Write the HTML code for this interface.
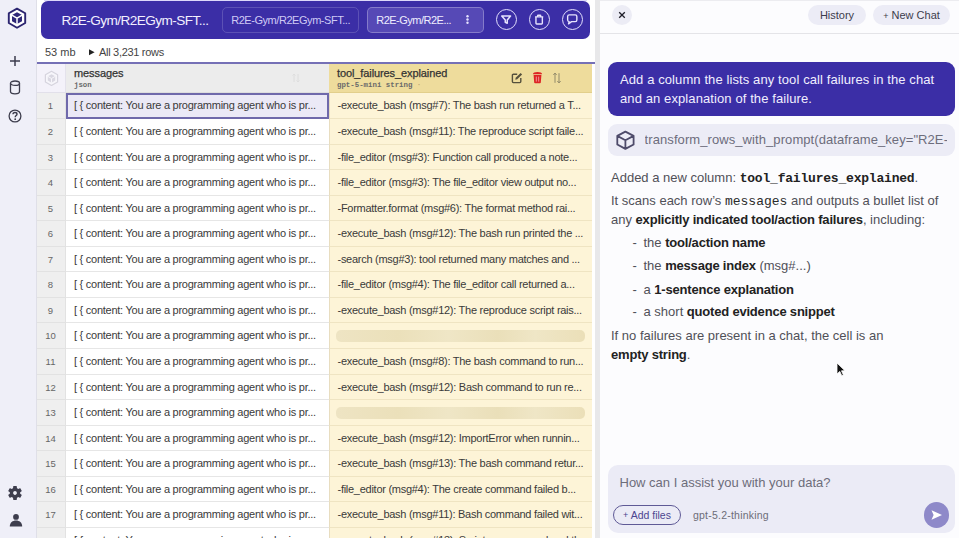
<!DOCTYPE html>
<html><head><meta charset="utf-8">
<style>
*{box-sizing:border-box;margin:0;padding:0}
html,body{width:959px;height:538px;overflow:hidden;background:#fff;font-family:"Liberation Sans",sans-serif;color:#333}
.abs{position:absolute}
#sidebar{position:absolute;left:0;top:0;width:37px;height:538px;background:#efeff8;border-right:1px solid #dfdfe8;z-index:2}
#sidebar svg{position:absolute}
#main{position:absolute;left:36px;top:0;width:559px;height:538px;background:#fff;overflow:hidden}
#hdr{position:absolute;left:5.2px;top:1.2px;width:549px;height:37.4px;background:#3b2ea6;border-radius:7px}
#title{position:absolute;left:20.2px;top:11.8px;font-size:13.6px;line-height:16px;color:#f2f0ff;letter-spacing:-0.55px;white-space:nowrap}
.tab{position:absolute;top:6px;height:26px;border-radius:5px;border:1px solid rgba(255,255,255,0.17);font-size:11px;line-height:24px;color:#cfcaf5;white-space:nowrap;letter-spacing:-0.45px}
#tab1{left:181px;width:137px;padding-left:8px}
#tab2{left:326px;width:117px;padding-left:8px;letter-spacing:-0.5px;background:#5649b6;border-color:rgba(255,255,255,0.28);color:#efedff}
.kebab{position:absolute;right:14.5px;top:7px;width:3px;height:10px}
.kebab i{display:block;width:2.4px;height:2.4px;border-radius:50%;background:#e6e3ff;margin:0 0 0.9px 0}
.circ{position:absolute;top:7.8px;width:21.5px;height:21.5px;border-radius:50%;border:1.6px solid #e2dffd}
.circ svg{position:absolute;left:0;top:0}
#info{position:absolute;left:9px;top:46px;font-size:11px;line-height:13px;color:#444;white-space:nowrap}
#info .tri{position:absolute;left:43px;top:1px;font-size:8px}
#info .all{position:absolute;left:54px;top:0;letter-spacing:-0.3px}
#tline{position:absolute;left:0;top:62px;width:559px;height:2px;background:#7570b6}
#thead{position:absolute;left:0;top:64px;width:559px;height:28.6px}
.h0{position:absolute;left:0;top:0;width:30px;height:28.6px;background:#f4f2fa;border-bottom:1px solid #e2e0ea;border-right:1px solid #e4e2ec}
.h1{position:absolute;left:30px;top:0;width:263px;height:28.6px;background:#ececec;border-bottom:1px solid #dedede}
.h2{position:absolute;left:293px;top:0;width:263px;height:28.6px;background:#eedc9c;border-bottom:1px solid #e2cf8c}
.hn{position:absolute;left:8px;top:3px;font-size:11px;line-height:13px;color:#333;letter-spacing:-0.1px;white-space:nowrap;-webkit-text-stroke:0.25px #333}
.ht{position:absolute;left:8px;top:15.5px;font-family:"Liberation Mono",monospace;font-size:7.4px;line-height:10px;color:#6a6a6a;font-weight:bold;white-space:nowrap}
.row{position:absolute;left:0;width:559px;height:25.6px}
.idx{position:absolute;left:0;top:0;width:30px;height:25.6px;background:#efefef;border-bottom:1px solid #e2e2e2;border-right:1px solid #e2e2e2;font-size:9.5px;line-height:25.2px;text-align:center;color:#666}
.c1{position:absolute;left:30px;top:0;width:263px;height:25.6px;background:#fff;border-bottom:1px solid #e6e6e6;font-size:11px;line-height:25px;padding-left:8px;color:#3a3a3a;letter-spacing:-0.26px;white-space:nowrap;overflow:hidden}
.c1.sel{background:#ebe9f6;border:2px solid #6f69ab;padding-left:6px;line-height:21.6px}
.c2{position:absolute;left:293px;top:0;width:263px;height:25.6px;background:#fdf4d7;border-bottom:1px solid #efe4c2;border-left:1px solid #e8ddc0;font-size:11px;line-height:25px;padding-left:7.5px;color:#3a3a3a;letter-spacing:-0.27px;white-space:nowrap;overflow:hidden}
.skel{position:absolute;left:5.5px;top:6.5px;width:249.5px;height:12px;border-radius:5px;background:linear-gradient(90deg,#eee4c3 0%,#ebe0ba 25%,#efe6c6 45%,#eadfb9 65%,#efe6c6 80%,#ebdfb8 100%);filter:blur(0.4px)}
#resizer{position:absolute;left:595px;top:0;width:5px;height:538px;background:#e8e8ea}
#chat{position:absolute;left:600px;top:0;width:359px;height:538px;background:#fcfcfe;overflow:hidden}
#chead{position:absolute;left:0;top:0;width:359px;height:34px;border-bottom:1px solid #e4e4e8;border-top:1px solid #ececf0}
#close{position:absolute;left:11.5px;top:3.8px;width:20px;height:20px;border-radius:50%;background:#ececf5}
.pill{position:absolute;top:4px;height:20px;border-radius:10px;background:#ececf6;font-size:11px;line-height:20px;color:#3c3c4c;text-align:center;white-space:nowrap}
#bubble{position:absolute;left:8px;top:62px;width:347px;height:53.5px;border-radius:9px;background:#3b2ea6;color:#f1eeff;font-size:13px;line-height:19px;padding:8.4px 0 0 12px;letter-spacing:0.1px}
#tool{position:absolute;left:8px;top:124px;width:347px;height:32px;border-radius:9px;background:#ececf6;overflow:hidden}
#tool .t{position:absolute;left:36.6px;top:8px;width:302px;overflow:hidden;font-size:13px;line-height:16px;color:#6d6d7c;white-space:nowrap;letter-spacing:0.08px}
#resp{position:absolute;left:11px;top:167px;width:345px;font-size:13px;line-height:19px;color:#505058}
.ln{position:absolute;left:0;white-space:nowrap}
.dash{position:absolute;left:-11px}
#resp b{color:#222;font-weight:bold;letter-spacing:-0.2px}
#resp code{font-family:"Liberation Mono",monospace;color:#2a2a2a;line-height:0}
#input{position:absolute;left:8px;top:464.5px;width:346.5px;height:68px;border-radius:10px;background:#ebebf6}
#ph{position:absolute;left:11.5px;top:10px;font-size:13px;line-height:16px;color:#6d6d7a;white-space:nowrap}
#addf{position:absolute;left:5px;top:40px;width:68px;height:20px;border-radius:10px;border:1px solid #5f5a96;font-size:10.5px;line-height:18px;color:#4b4690;text-align:center;white-space:nowrap}
#model{position:absolute;left:85px;top:44px;font-size:10.5px;line-height:13px;color:#6d6d78;white-space:nowrap;letter-spacing:0.22px}
#send{position:absolute;left:315.5px;top:37.5px;width:25.5px;height:25.5px;border-radius:50%;background:#8e89c9}
</style></head><body>
<div id="sidebar">
  <svg style="left:6px;top:7px" width="22" height="23" viewBox="0 0 22 23"><path d="M11 1.6 L19.2 6.3 V16 L11 20.7 L2.8 16 V6.3 Z" fill="#fff" stroke="#2b2470" stroke-width="1.9" stroke-linejoin="round"/><path d="M11 5.2 L16 8.1 V14.2 L11 17.1 L6 14.2 V8.1 Z" fill="#2f2878"/><path d="M5.8 8.1 L11 11.1 L16.2 8.1 M11 11.1 V17.4" fill="none" stroke="#fff" stroke-width="1.5"/></svg>
  <svg style="left:9px;top:55px" width="12" height="12" viewBox="0 0 12 12"><path d="M6 1V11M1 6H11" stroke="#3d3d4d" stroke-width="1.5"/></svg>
  <svg style="left:9px;top:80px" width="12" height="15" viewBox="0 0 12 15"><ellipse cx="6" cy="3.2" rx="4.5" ry="2.2" fill="none" stroke="#3d3d4d" stroke-width="1.3"/><path d="M1.5 3.2V11.6C1.5 12.8 3.5 13.8 6 13.8S10.5 12.8 10.5 11.6V3.2" fill="none" stroke="#3d3d4d" stroke-width="1.3"/></svg>
  <svg style="left:8px;top:108.5px" width="14" height="14" viewBox="0 0 14 14"><circle cx="7" cy="7" r="5.9" fill="none" stroke="#3d3d4d" stroke-width="1.3"/><path d="M5 5.3C5 4.1 5.9 3.5 7 3.5S9 4.2 9 5.2C9 6.5 7.2 6.6 7.2 8.2" fill="none" stroke="#3d3d4d" stroke-width="1.4"/><circle cx="7.2" cy="10.2" r="0.9" fill="#3d3d4d"/></svg>
  <svg style="left:8.2px;top:486px" width="14" height="14" viewBox="2.3 2.3 19.4 19.4"><path fill="#3d3d4d" d="M19.14 12.94c.04-.3.06-.61.06-.94 0-.32-.02-.64-.07-.94l2.03-1.58c.18-.14.23-.41.12-.61l-1.92-3.32c-.12-.22-.37-.29-.59-.22l-2.39.96c-.5-.38-1.03-.7-1.620-.94l-.36-2.54c-.04-.24-.24-.41-.48-.41h-3.84c-.24 0-.43.17-.47.41l-.36 2.54c-.59.24-1.13.57-1.62.94l-2.39-.96c-.22-.08-.47 0-.59.22L2.740 8.87c-.12.21-.08.47.12.61l2.03 1.58c-.05.3-.09.63-.09.94s.02.64.07.94l-2.03 1.58c-.18.14-.23.41-.12.61l1.92 3.32c.12.22.37.29.59.22l2.39-.96c.5.38 1.03.7 1.62.94l.36 2.54c.05.24.24.41.48.41h3.84c.24 0 .44-.17.47-.41l.36-2.54c.59-.24 1.13-.56 1.62-.94l2.39.96c.22.08.47 0 .59-.22l1.92-3.32c.12-.22.07-.47-.12-.61l-2.010-1.58zM12 14.6c-1.43 0-2.6-1.17-2.6-2.6s1.17-2.6 2.6-2.6 2.6 1.17 2.6 2.6-1.17 2.6-2.6 2.6z"/></svg>
  <svg style="left:8.5px;top:513px" width="14" height="14" viewBox="0 0 14 14"><circle cx="7" cy="3.9" r="2.9" fill="#3d3d4d"/><path d="M0.8 13.6C0.8 9.6 3.6 7.6 7 7.6S13.2 9.6 13.2 13.6Z" fill="#3d3d4d"/></svg>
</div>
<div id="main">
  <div style="position:absolute;left:8px;top:0;width:543px;height:1px;background:#dcd8fa"></div>
  <div id="hdr">
    <div id="title">R2E-Gym/R2EGym-SFT...</div>
    <div class="tab" id="tab1">R2E-Gym/R2EGym-SFT...</div>
    <div class="tab" id="tab2">R2E-Gym/R2E...<svg style="position:absolute;left:97px;top:7px" width="5" height="11" viewBox="0 0 5 11"><circle cx="2.5" cy="1.3" r="1.2" fill="#e6e3ff"/><circle cx="2.5" cy="4.5" r="1.2" fill="#e6e3ff"/><circle cx="2.5" cy="7.7" r="1.2" fill="#e6e3ff"/></svg></div>
    <div class="circ" style="left:454.55px"><svg width="19" height="19" viewBox="-9.15 -9.15 19 19"><path d="M-4.4 -3.1H4.4L1.1 0.9V4.1L-0.9 3.1V0.9Z" fill="none" stroke="#e6e3fd" stroke-width="1.5" stroke-linejoin="round"/></svg></div>
    <div class="circ" style="left:487.55px"><svg width="19" height="19" viewBox="-9.15 -9.15 19 19"><path d="M-3.2 -2.3H3.2V4.1C3.2 4.5 2.9 4.8 2.5 4.8H-2.5C-2.9 4.8 -3.2 4.5 -3.2 4.1Z M-4.1 -2.3H4.1 M-1.6 -2.5V-3.2C-1.6 -3.6 -1.3 -3.9 -0.9 -3.9H0.9C1.3 -3.9 1.6 -3.6 1.6 -3.2V-2.5" fill="none" stroke="#e6e3fd" stroke-width="1.4" stroke-linejoin="round"/></svg></div>
    <div class="circ" style="left:520.55px"><svg width="19" height="19" viewBox="-9.15 -9.15 19 19"><path d="M-2.9 -4.3H3.1C4.1 -4.3 4.7 -3.7 4.7 -2.7V0.9C4.7 1.9 4.1 2.5 3.1 2.5H-0.6L-3.6 4.7 -3 2.5C-4 2.4 -4.5 1.8 -4.5 0.9V-2.7C-4.5 -3.7 -3.9 -4.3 -2.9 -4.3Z" fill="none" stroke="#e6e3fd" stroke-width="1.4" stroke-linejoin="round"/></svg></div>
  </div>
  <div id="info">53 mb<svg style="position:absolute;left:43.5px;top:3.3px" width="6" height="7" viewBox="0 0 6 7"><path d="M0 0.3L5.6 3.3 0 6.3Z" fill="#222"/></svg><span class="all">All 3,231 rows</span></div>
  <div id="tline"></div>
  <div id="thead">
    <div class="h0"><svg style="position:absolute;left:7.5px;top:6px" width="15" height="17" viewBox="0 0 15 17"><path d="M7.5 1.3L13.6 4.8V12L7.5 15.5L1.4 12V4.8Z" fill="#f7f6fb" stroke="#d6d4de" stroke-width="1.2" stroke-linejoin="round"/><path d="M7.5 4.2L11.2 6.3V10.6L7.5 12.7L3.8 10.6V6.3Z" fill="#dad8e2"/><path d="M3.7 6.3L7.5 8.5L11.3 6.3M7.5 8.5V12.8" fill="none" stroke="#f7f6fb" stroke-width="1"/></svg></div>
    <div class="h1"><div class="hn">messages</div><div class="ht">json</div><svg style="position:absolute;left:225px;top:8px" width="10" height="12" viewBox="0 0 10 12"><path d="M3 10V2M1.5 3.5L3 2 4.5 3.5M7 2V10M5.5 8.5L7 10 8.5 8.5" fill="none" stroke="#dcdcdc" stroke-width="0.9"/></svg></div>
    <div class="h2"><div class="hn">tool_failures_explained</div><div class="ht">gpt-5-mini string <span style="color:#b9a877">&#183;</span></div>
      <svg style="position:absolute;left:182px;top:7.5px" width="12" height="12" viewBox="0 0 12 12"><path d="M6.2 2.2H2.4C1.8 2.2 1.4 2.6 1.4 3.2V9.6C1.4 10.2 1.8 10.6 2.4 10.6H8.8C9.4 10.6 9.8 10.2 9.8 9.6V6" fill="none" stroke="#55503c" stroke-width="1.4"/><path d="M9.6 0.9L11.1 2.4 6.2 7.3 4.3 7.7 4.7 5.8Z" fill="#55503c"/></svg>
      <svg style="position:absolute;left:202.5px;top:7px" width="11" height="13" viewBox="0 0 11 13"><path d="M0.9 3.3C0.9 1.9 2.9 1.0 5.5 1.0S10.1 1.9 10.1 3.3Z" fill="#dd2424"/><path d="M1.6 4.0H9.4L8.8 11.4C8.8 11.9 8.4 12.2 7.9 12.2H3.1C2.6 12.2 2.2 11.9 2.2 11.4Z" fill="#dd2424"/><path d="M4.3 5.6V10.6M6.7 5.6V10.6" stroke="#f4a3a3" stroke-width="0.9"/></svg>
      <svg style="position:absolute;left:222.5px;top:7.5px" width="10" height="13" viewBox="0 0 10 13"><path d="M3 10.8V1.2M1.3 2.9L3 1.2 4.7 2.9M7 1.2V10.8M5.3 9.1L7 10.8 8.7 9.1" fill="none" stroke="#6c6754" stroke-width="0.7"/></svg>
    </div>
  </div>
  <div id="rows" style="position:absolute;left:0;top:0.8px;width:559px;height:538px">
<div class="row" style="top:92.60px"><div class="idx">1</div><div class="c1 sel"><span>[ { content: You are a programming agent who is pr...</span></div><div class="c2"><span>-execute_bash (msg#7): The bash run returned a T...</span></div></div>
<div class="row" style="top:118.16px"><div class="idx">2</div><div class="c1"><span>[ { content: You are a programming agent who is pr...</span></div><div class="c2"><span>-execute_bash (msg#11): The reproduce script faile...</span></div></div>
<div class="row" style="top:143.72px"><div class="idx">3</div><div class="c1"><span>[ { content: You are a programming agent who is pr...</span></div><div class="c2"><span>-file_editor (msg#3): Function call produced a note...</span></div></div>
<div class="row" style="top:169.28px"><div class="idx">4</div><div class="c1"><span>[ { content: You are a programming agent who is pr...</span></div><div class="c2"><span>-file_editor (msg#3): The file_editor view output no...</span></div></div>
<div class="row" style="top:194.84px"><div class="idx">5</div><div class="c1"><span>[ { content: You are a programming agent who is pr...</span></div><div class="c2"><span>-Formatter.format (msg#6): The format method rai...</span></div></div>
<div class="row" style="top:220.40px"><div class="idx">6</div><div class="c1"><span>[ { content: You are a programming agent who is pr...</span></div><div class="c2"><span>-execute_bash (msg#12): The bash run printed the ...</span></div></div>
<div class="row" style="top:245.96px"><div class="idx">7</div><div class="c1"><span>[ { content: You are a programming agent who is pr...</span></div><div class="c2"><span>-search (msg#3): tool returned many matches and ...</span></div></div>
<div class="row" style="top:271.52px"><div class="idx">8</div><div class="c1"><span>[ { content: You are a programming agent who is pr...</span></div><div class="c2"><span>-file_editor (msg#4): The file_editor call returned a...</span></div></div>
<div class="row" style="top:297.08px"><div class="idx">9</div><div class="c1"><span>[ { content: You are a programming agent who is pr...</span></div><div class="c2"><span>-execute_bash (msg#12): The reproduce script rais...</span></div></div>
<div class="row" style="top:322.64px"><div class="idx">10</div><div class="c1"><span>[ { content: You are a programming agent who is pr...</span></div><div class="c2"><i class="skel"></i></div></div>
<div class="row" style="top:348.20px"><div class="idx">11</div><div class="c1"><span>[ { content: You are a programming agent who is pr...</span></div><div class="c2"><span>-execute_bash (msg#8): The bash command to run...</span></div></div>
<div class="row" style="top:373.76px"><div class="idx">12</div><div class="c1"><span>[ { content: You are a programming agent who is pr...</span></div><div class="c2"><span>-execute_bash (msg#12): Bash command to run re...</span></div></div>
<div class="row" style="top:399.32px"><div class="idx">13</div><div class="c1"><span>[ { content: You are a programming agent who is pr...</span></div><div class="c2"><i class="skel"></i></div></div>
<div class="row" style="top:424.88px"><div class="idx">14</div><div class="c1"><span>[ { content: You are a programming agent who is pr...</span></div><div class="c2"><span>-execute_bash (msg#12): ImportError when runnin...</span></div></div>
<div class="row" style="top:450.44px"><div class="idx">15</div><div class="c1"><span>[ { content: You are a programming agent who is pr...</span></div><div class="c2"><span>-execute_bash (msg#13): The bash command retur...</span></div></div>
<div class="row" style="top:476.00px"><div class="idx">16</div><div class="c1"><span>[ { content: You are a programming agent who is pr...</span></div><div class="c2"><span>-file_editor (msg#4): The create command failed b...</span></div></div>
<div class="row" style="top:501.56px"><div class="idx">17</div><div class="c1"><span>[ { content: You are a programming agent who is pr...</span></div><div class="c2"><span>-execute_bash (msg#11): Bash command failed wit...</span></div></div>
<div class="row" style="top:527.12px"><div class="idx">18</div><div class="c1"><span>[ { content: You are a programming agent who is pr...</span></div><div class="c2"><span>-execute_bash (msg#13): Script … command and th...</span></div></div>
  </div>
</div>
<div id="resizer"></div>
<div id="chat">
  <div id="chead">
    <div id="close"><svg style="position:absolute;left:5px;top:5px" width="10" height="10" viewBox="0 0 10 10"><path d="M2.2 2.2L7.8 7.8M7.8 2.2L2.2 7.8" stroke="#1e1e28" stroke-width="1.3"/></svg></div>
    <div class="pill" style="left:208px;width:58px">History</div>
    <div class="pill" style="left:273px;width:77px"><span style="font-size:9px;position:relative;top:-0.5px">+</span> New Chat</div>
  </div>
  <div id="bubble">Add a column the lists any tool call failures in the chat<br>and an explanation of the failure.</div>
  <div id="tool"><svg style="position:absolute;left:8px;top:5.5px" width="19" height="20" viewBox="0 0 19 20"><path d="M9.4 1.6L17.6 5.9V14.5L9.4 18.9L1.3 14.5V5.9Z M1.3 5.9L9.4 10.3L17.6 5.9 M9.4 10.3V18.9" fill="none" stroke="#4e4b6a" stroke-width="1.8" stroke-linejoin="round"/></svg><div class="t">transform_rows_with_prompt(dataframe_key="R2E-Gym</div></div>
  <div id="resp">
    <div class="ln" style="top:0.65px">Added a new column: <code><b>tool_failures_explained</b></code>.</div>
    <div class="ln" style="top:24.10px">It scans each row&#8217;s <code>messages</code> and outputs a bullet list of</div>
    <div class="ln" style="top:42.70px">any <b>explicitly indicated tool/action failures</b>, including:</div>
    <div class="ln" style="top:66.10px;left:32.5px"><span class="dash">-</span>the <b>tool/action name</b></div>
    <div class="ln" style="top:89.00px;left:32.5px"><span class="dash">-</span>the <b>message index</b> (msg#...)</div>
    <div class="ln" style="top:112.50px;left:32.5px"><span class="dash">-</span>a <b>1-sentence explanation</b></div>
    <div class="ln" style="top:135.40px;left:32.5px"><span class="dash">-</span>a short <b>quoted evidence snippet</b></div>
    <div class="ln" style="top:159.2px">If no failures are present in a chat, the cell is an</div>
    <div class="ln" style="top:177.9px"><b>empty string</b>.</div>
  </div>
  <svg style="position:absolute;left:236px;top:362px" width="10" height="15" viewBox="0 0 10 15"><path d="M1 1V12L3.8 9.4 5.8 13.8 7.4 13 5.5 8.8H9Z" fill="#111" stroke="#fff" stroke-width="0.8"/></svg>
  <div id="input">
    <div id="ph">How can I assist you with your data?</div>
    <div id="addf"><span style="font-size:9px;position:relative;top:-0.5px">+</span> Add files</div>
    <div id="model">gpt-5.2-thinking</div>
    <div id="send"><svg style="position:absolute;left:6px;top:6.5px" width="13" height="12" viewBox="0 0 13 12"><path d="M1.5 1.2L12 6 1.5 10.8 3.6 6Z" fill="#fff"/></svg></div>
  </div>
</div>
</body></html>
